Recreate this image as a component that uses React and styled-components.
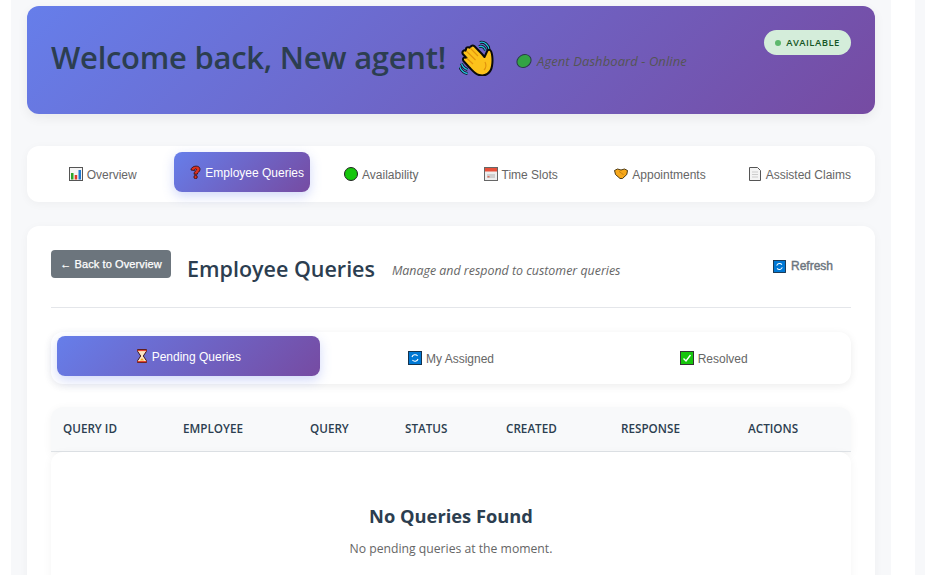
import React from 'react';
import styled, { createGlobalStyle } from 'styled-components';

const GlobalStyle = createGlobalStyle`
  html, body {
    margin: 0;
    height: 575px;
    overflow: hidden;
    background: #fff;
  }
  * { box-sizing: border-box; }
`;

const gradient = 'linear-gradient(135deg, #667eea 0%, #764ba2 100%)';
const uiFont = '"Open Sans", "Noto Sans", sans-serif';
const btnFont = '"Liberation Sans", Arial, sans-serif';

const Page = styled.div`
  display: flex;
  height: 575px;
  padding-left: 11px;
`;
const Main = styled.main`
  width: 880px;
  flex: none;
  padding: 6px 16px 0;
  background: #f7f8fa;
  font-family: ${uiFont};
`;
const Gutter = styled.div`
  width: 24px;
  flex: none;
`;
const RightRail = styled.div`
  flex: 1;
  background: #f7f8fa;
`;
const Hero = styled.header`
  position: relative;
  height: 108px;
  padding: 0 24px 4px;
  display: flex;
  align-items: center;
  border-radius: 12px;
  background: ${gradient};
  box-shadow: 0 4px 12px rgba(0, 0, 0, 0.06);
`;
const HeroTitle = styled.h1`
  margin: 0;
  display: flex;
  align-items: center;
  gap: 13px;
  font-size: 31px;
  font-weight: 600;
  letter-spacing: -0.27px;
  line-height: 40px;
  color: #2c3e50;
`;
const HeroTitleText = styled.span`
  margin-top: -2px;
`;
const HeroSub = styled.p`
  margin: 6px 0 0 21px;
  display: flex;
  align-items: center;
  gap: 5px;
  font-size: 13px;
  font-style: italic;
  letter-spacing: 0.08px;
  color: #555;
`;
const Badge = styled.span`
  position: absolute;
  top: 24px;
  right: 24px;
  height: 25px;
  width: 87px;
  display: flex;
  align-items: center;
  justify-content: center;
  gap: 5px;
  border-radius: 13px;
  background: #d4edda;
  color: #155724;
  font-size: 9.5px;
  font-weight: 600;
  letter-spacing: 0.45px;
  text-transform: uppercase;
`;
const Dot = styled.i`
  width: 6px;
  height: 6px;
  border-radius: 50%;
  background: #5cb86c;
`;
const Nav = styled.nav`
  margin-top: 32px;
  height: 56px;
  padding: 8px;
  display: grid;
  grid-template-columns: repeat(6, 1fr);
  gap: 4px;
  border-radius: 12px;
  background: #fff;
  box-shadow: 0 2px 10px rgba(0, 0, 0, 0.04);
`;
const TabButton = styled.button`
  height: 40px;
  min-width: 0;
  padding: 0 16px;
  display: block;
  border: 0;
  border-radius: 8px;
  white-space: nowrap;
  text-align: center;
  font-family: ${btnFont};
  font-size: 12px;
  color: ${p => (p.$active ? '#fff' : '#666')};
  background: ${p => (p.$active ? gradient : 'transparent')};
  box-shadow: ${p => (p.$active ? '0 4px 12px rgba(102, 126, 234, 0.3)' : 'none')};
  transform: ${p => (p.$active ? 'translateY(-2px)' : 'none')};
  svg {
    vertical-align: -2px;
    margin-right: 4px;
  }
`;
const Card = styled.section`
  margin-top: 24px;
  height: 400px;
  padding: 24px;
  border-radius: 12px;
  background: #fff;
  box-shadow: 0 2px 10px rgba(0, 0, 0, 0.04);
`;
const CardHead = styled.div`
  height: 58px;
  display: flex;
  align-items: flex-start;
  border-bottom: 1px solid #e4e6ea;
`;
const BackButton = styled.button`
  width: 120px;
  height: 28px;
  padding: 0;
  border: 0;
  border-radius: 4px;
  background: #6c757d;
  color: #fff;
  font-family: ${btnFont};
  font-size: 11px;
  letter-spacing: 0.1px;
  -webkit-text-stroke: 0.25px #fff;
`;
const CardTitle = styled.h2`
  margin: 3px 0 0 16px;
  font-size: 21.5px;
  line-height: 32px;
  font-weight: 600;
  color: #2c3e50;
`;
const CardDesc = styled.p`
  margin: 12px 0 0 17px;
  font-size: 12.4px;
  line-height: 18px;
  font-style: italic;
  color: #666;
`;
const RefreshButton = styled.button`
  margin: 9px 18px 0 auto;
  padding: 0;
  border: 0;
  background: none;
  display: flex;
  align-items: center;
  gap: 5px;
  font-family: ${btnFont};
  font-size: 12px;
  color: #6c757d;
  -webkit-text-stroke: 0.4px #6c757d;
`;
const SubTabs = styled.div`
  margin-top: 24px;
  height: 52px;
  padding: 6px;
  display: grid;
  grid-template-columns: repeat(3, 1fr);
  border-radius: 12px;
  background: #fff;
  box-shadow: 0 2px 8px rgba(0, 0, 0, 0.08);
`;
const TableHead = styled.div`
  margin-top: 23px;
  height: 45px;
  padding: 0 0 2px 12px;
  display: grid;
  grid-template-columns: 120px 127px 95px 101px 115px 127px 1fr;
  align-items: center;
  border-radius: 12px 12px 0 0;
  background: #f8f9fa;
  border-bottom: 1px solid #dee2e6;
  box-shadow: 0 2px 10px rgba(0, 0, 0, 0.05);
  font-size: 11.7px;
  font-weight: 600;
  color: #2c3e50;
  text-transform: uppercase;
`;
const Empty = styled.div`
  height: 130px;
  padding-top: 50px;
  text-align: center;
  border-radius: 12px 12px 0 0;
  background: #fff;
  box-shadow: 0 2px 10px rgba(0, 0, 0, 0.05);
  h3 {
    margin: 0;
    font-size: 18.3px;
    line-height: 28px;
    font-weight: 700;
    color: #2c3e50;
  }
  p {
    margin: 10px 0 0;
    font-size: 12.2px;
    line-height: 18px;
    color: #666;
  }
`;

const Icon = ({ w = 14, h = 14, vb = '0 0 14 14', children }) => (
  <svg width={w} height={h} viewBox={vb} aria-hidden="true">{children}</svg>
);
const ChartIcon = () => (
  <Icon>
    <rect x="0.5" y="0.5" width="13" height="13" fill="#f4f4f4" stroke="#555" />
    <rect x="2" y="6" width="2.5" height="6.5" fill="#2aa52a" />
    <rect x="5.7" y="8" width="2.5" height="4.5" fill="#e0392b" />
    <rect x="9.5" y="3" width="2.5" height="9.5" fill="#1e78d2" />
  </Icon>
);
const QuestionIcon = () => (
  <Icon w={11} vb="1.500 0 11 14">
    <path d="M2.500 5C2.500 0.500 11.500 -0.500 11.500 4.300 11.500 7.300 8.800 7 8.800 9.200H5.500C5.500 6 8 6 8 4.500 8 3.300 6 3.500 6 5.500Z" fill="#e0311f" stroke="#2b0a06" strokeWidth="0.8" />
    <circle cx="7.100" cy="12" r="1.700" fill="#e0311f" stroke="#2b0a06" strokeWidth="0.8" />
  </Icon>
);
const GreenCircleIcon = () => (
  <Icon>
    <circle cx="7" cy="7" r="6.500" fill="#16c60c" stroke="#222" />
  </Icon>
);
const CalendarIcon = () => (
  <Icon>
    <rect x="0.5" y="0.5" width="13" height="13" fill="#eee" stroke="#666" />
    <rect x="1" y="1" width="12" height="3.500" fill="#e8503a" />
    <rect x="3" y="7" width="8" height="4" fill="#cfcfcf" />
    <rect x="3.500" y="9" width="2" height="1.500" fill="#d87060" />
  </Icon>
);
const HandshakeIcon = () => (
  <Icon>
    <path d="M0.500 3.500 3.500 2 7 3 10.500 2 13.500 3.500 12.800 7.500 8.500 11.500 6 11.500 1.500 7.500Z" fill="#f7a81b" stroke="#3a2a08" strokeWidth="0.900" strokeLinejoin="round" />
    <path d="M5 4.500 7.500 6 9.500 8" fill="none" stroke="#b9770e" strokeWidth="0.800" />
  </Icon>
);
const DocIcon = () => (
  <Icon>
    <path d="M1.500 0.500H9.500L12.500 3.500V13.500H1.500Z" fill="#f4f4f4" stroke="#555" />
    <path d="M4 5H10M4 7.500H10M4 10H10" stroke="#ccc" />
  </Icon>
);
const HourglassIcon = () => (
  <Icon w={12} vb="1 0 12 14">
    <path d="M2.500 0.500H11.500V2.200L8.300 7 11.500 11.800V13.500H2.500V11.800L5.700 7 2.500 2.200Z" fill="#fbe6c2" stroke="#40161a" />
    <rect x="2.500" y="0.800" width="9" height="1.300" fill="#e5432f" />
    <rect x="2.500" y="12" width="9" height="1.300" fill="#e5432f" />
    <path d="M5 11.500 7 9 9 11.500Z" fill="#f5a623" />
  </Icon>
);
const RefreshIcon = ({ size = 14 }) => (
  <Icon w={size} h={size}>
    <rect x="0.500" y="0.500" width="13" height="13" fill="#0078d4" stroke="#16334d" />
    <path d="M4 6A3.200 3.200 0 0 1 9.600 5M10 8A3.200 3.200 0 0 1 4.400 9" fill="none" stroke="#fff" strokeWidth="1.100" />
  </Icon>
);
const CheckIcon = () => (
  <Icon>
    <rect x="0.500" y="0.500" width="13" height="13" fill="#16c60c" stroke="#333" />
    <path d="M3.500 7.500 6 10 10.500 4" fill="none" stroke="#fff" strokeWidth="1.400" />
  </Icon>
);
const wavePaths = 'M20 6.500C23 5.500 26 7.500 26.500 10.500M21 2.500C25 1 29.500 5 30 9.500M2.500 23.500C3.500 26.500 5.500 28.500 8.500 29.500M0.800 27C2.500 31 4.500 33 8.500 33.500';
const WaveIcon = () => (
  <svg width="36" height="36" viewBox="0 0 36 36" aria-hidden="true">
    <path d={wavePaths} fill="none" stroke="#0b1118" strokeWidth="3" />
    <path d={wavePaths} fill="none" stroke="#23c0e0" strokeWidth="1.300" />
    <path d="M31 10C33.500 11.500 34 21 33 26 32 33 26 37 20 35 16 34 13 30 10 27L4.500 21C3 18.500 5 16.500 7.500 18L3.800 14C2.500 11.500 5 9.500 7 10.800L7 10C6.500 7.500 9 6.500 11 7.800 11.500 5.500 14 5 15.500 6.300L23 14 25.500 17 28 11.500C28.600 10 30 9.500 31 10Z" fill="#fcc21b" stroke="#0b0b0b" strokeWidth="2" strokeLinejoin="round" />
    <path d="M7.500 18 14 24M7 10.800 16.500 20M11 7.800 19 16M26 22C27.500 25 27 28 25 30" fill="none" stroke="#e2940e" strokeWidth="1.200" />
  </svg>
);
const OnlineDot = () => (
  <svg width="16" height="16" viewBox="0 0 16 16" aria-hidden="true">
    <ellipse cx="8" cy="8" rx="7.300" ry="6.200" transform="rotate(-30 8 8)" fill="#33a344" stroke="#2b3a4a" />
  </svg>
);

const mainTabs = [
  { label: 'Overview', icon: <ChartIcon /> },
  { label: 'Employee Queries', icon: <QuestionIcon />, active: true },
  { label: 'Availability', icon: <GreenCircleIcon /> },
  { label: 'Time Slots', icon: <CalendarIcon /> },
  { label: 'Appointments', icon: <HandshakeIcon /> },
  { label: 'Assisted Claims', icon: <DocIcon /> },
];
const queryTabs = [
  { label: 'Pending Queries', icon: <HourglassIcon />, active: true },
  { label: 'My Assigned', icon: <RefreshIcon /> },
  { label: 'Resolved', icon: <CheckIcon /> },
];
const columns = ['Query ID', 'Employee', 'Query', 'Status', 'Created', 'Response', 'Actions'];

const App = () => (
  <Page>
    <GlobalStyle />
    <Main>
      <Hero>
        <HeroTitle><HeroTitleText>Welcome back, New agent!</HeroTitleText> <WaveIcon /></HeroTitle>
        <HeroSub><OnlineDot /> Agent Dashboard - Online</HeroSub>
        <Badge><Dot />Available</Badge>
      </Hero>
      <Nav>
        {mainTabs.map(t => (
          <TabButton key={t.label} $active={t.active}>{t.icon}{t.label}</TabButton>
        ))}
      </Nav>
      <Card>
        <CardHead>
          <BackButton>← Back to Overview</BackButton>
          <CardTitle>Employee Queries</CardTitle>
          <CardDesc>Manage and respond to customer queries</CardDesc>
          <RefreshButton><RefreshIcon size={13} />Refresh</RefreshButton>
        </CardHead>
        <SubTabs>
          {queryTabs.map(t => (
            <TabButton key={t.label} $active={t.active}>{t.icon}{t.label}</TabButton>
          ))}
        </SubTabs>
        <TableHead>
          {columns.map(c => <span key={c}>{c}</span>)}
        </TableHead>
        <Empty>
          <h3>No Queries Found</h3>
          <p>No pending queries at the moment.</p>
        </Empty>
      </Card>
    </Main>
    <Gutter />
    <RightRail />
  </Page>
);

export default App;
